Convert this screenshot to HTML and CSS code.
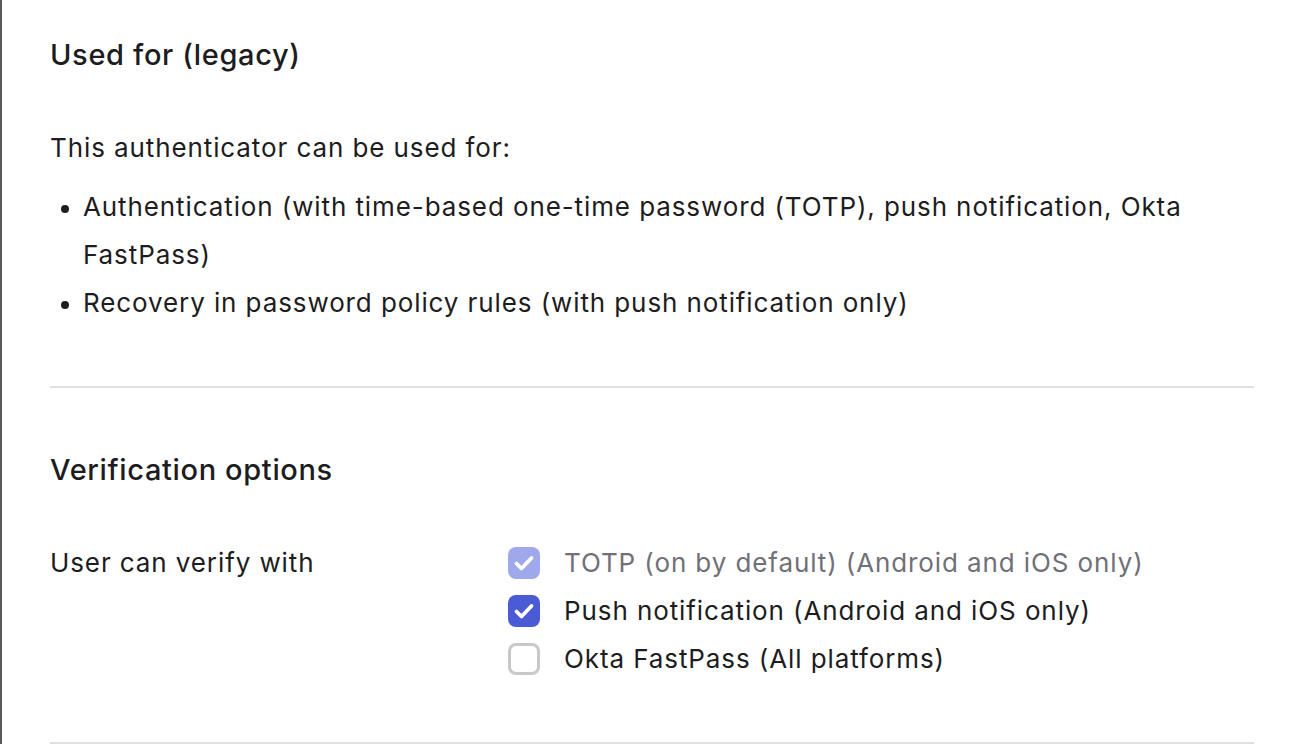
FILE: index.html
```html
<!DOCTYPE html>
<html lang="en">
<head>
<meta charset="utf-8">
<title>Authenticator settings</title>
<link rel="stylesheet" href="styles.css">
</head>
<body>
<div class="frame">
  <main class="content">
    <section class="section">
      <h2 class="section-title">Used for (legacy)</h2>
      <p class="intro">This authenticator can be used for:</p>
      <ul class="uses">
        <li>Authentication (with time-based one-time password (TOTP), push notification, Okta FastPass)</li>
        <li>Recovery in password policy rules (with push notification only)</li>
      </ul>
    </section>
    <hr class="divider">
    <section class="section">
      <h2 class="section-title title-2">Verification options</h2>
      <div class="field">
        <div class="field-label">User can verify with</div>
        <div class="options">
          <label class="option disabled">
            <span class="box checked">
              <svg viewBox="0 0 32 32" width="32" height="32"><path d="M8.5 16.5l5 5 10-10.5" fill="none" stroke="#fff" stroke-width="3.8" stroke-linecap="round" stroke-linejoin="round"/></svg>
            </span>
            <span class="option-text">TOTP (on by default) (Android and iOS only)</span>
          </label>
          <label class="option">
            <span class="box checked">
              <svg viewBox="0 0 32 32" width="32" height="32"><path d="M8.5 16.5l5 5 10-10.5" fill="none" stroke="#fff" stroke-width="3.8" stroke-linecap="round" stroke-linejoin="round"/></svg>
            </span>
            <span class="option-text">Push notification (Android and iOS only)</span>
          </label>
          <label class="option">
            <span class="box"></span>
            <span class="option-text">Okta FastPass (All platforms)</span>
          </label>
        </div>
      </div>
    </section>
    <hr class="divider">
  </main>
</div>
</body>
</html>
```
FILE: styles.css
```css
* { box-sizing: border-box; }
html, body {
  margin: 0;
  padding: 0;
  background: #ffffff;
}
body {
  font-family: Inter, "Noto Sans", "Liberation Sans", sans-serif;
  color: #1d1d21;
  font-size: 26px;
  line-height: 48px;
  letter-spacing: 0.9px;
}
.frame {
  border-left: 2px solid #5a5a5a;
  min-height: 744px;
  padding-left: 48px;
  width: 1298px;
}
.content {
  width: 1204px;
}
.section-title {
  margin: 0;
  padding-top: 37px;
  font-size: 29px;
  line-height: 36px;
  font-weight: 500;
  letter-spacing: 0.65px;
}
.title-2 {
  padding-top: 64px;
}
.intro {
  margin: 51px 0 0;
}
.uses {
  margin: 11px 0 0;
  padding-left: 33px;
}
.uses li::marker {
  font-size: 24px;
}
.divider {
  border: 0;
  border-top: 2px solid #e1e1e1;
  margin: 59px 0 0;
  height: 0;
}
.field {
  display: flex;
  margin-top: 51px;
}
.field-label {
  width: 458px;
  flex: none;
}
.options {
  display: flex;
  flex-direction: column;
}
.option {
  display: flex;
  align-items: center;
  gap: 24px;
  height: 48px;
}
.box {
  width: 32px;
  height: 32px;
  border-radius: 8px;
  border: 3px solid #c8c8c8;
  flex: none;
  display: flex;
  align-items: center;
  justify-content: center;
}
.box svg { display: block; }
.box.checked {
  border: 0;
  background: #4b5bd5;
}
.option.disabled .box.checked {
  background: #a0a8ec;
}
.option.disabled .option-text {
  color: #707078;
}
```
